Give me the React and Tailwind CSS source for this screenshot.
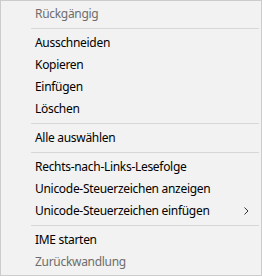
import React from "react";

const items = [
  { label: "Rückgängig", disabled: true },
  { sep: true },
  { label: "Ausschneiden" },
  { label: "Kopieren" },
  { label: "Einfügen" },
  { label: "Löschen" },
  { sep: true },
  { label: "Alle auswählen" },
  { sep: true },
  { label: "Rechts-nach-Links-Lesefolge" },
  { label: "Unicode-Steuerzeichen anzeigen" },
  { label: "Unicode-Steuerzeichen einfügen", sub: true },
  { sep: true },
  { label: "IME starten" },
  { label: "Zurückwandlung", disabled: true },
];

export default function App() {
  return (
    <div className="w-[262px] h-[276px] border border-[#cccccc] bg-[#f2f2f2] p-[2px] flex flex-col font-['Segoe_UI','Noto_Sans',sans-serif] text-[12px] tracking-[-0.3px]">
      {items.map((it, i) =>
        it.sep ? (
          <div key={i} className="h-[7px] flex items-center ml-[28px]">
            <div className="flex-1 h-px bg-[#d7d7d7]" />
          </div>
        ) : (
          <div
            key={i}
            className={`h-[22px] flex items-center pl-[32px] pr-[10px] ${
              it.disabled ? "text-[#6d6d6d]" : "text-black"
            }`}
          >
            <span className="flex-1 whitespace-nowrap">{it.label}</span>
            {it.sub && (
              <svg width="5" height="8" viewBox="0 0 5 8">
                <polyline points="0.5,0.5 4,4 0.5,7.5" fill="none" stroke="#333" strokeWidth="1" />
              </svg>
            )}
          </div>
        )
      )}
    </div>
  );
}
